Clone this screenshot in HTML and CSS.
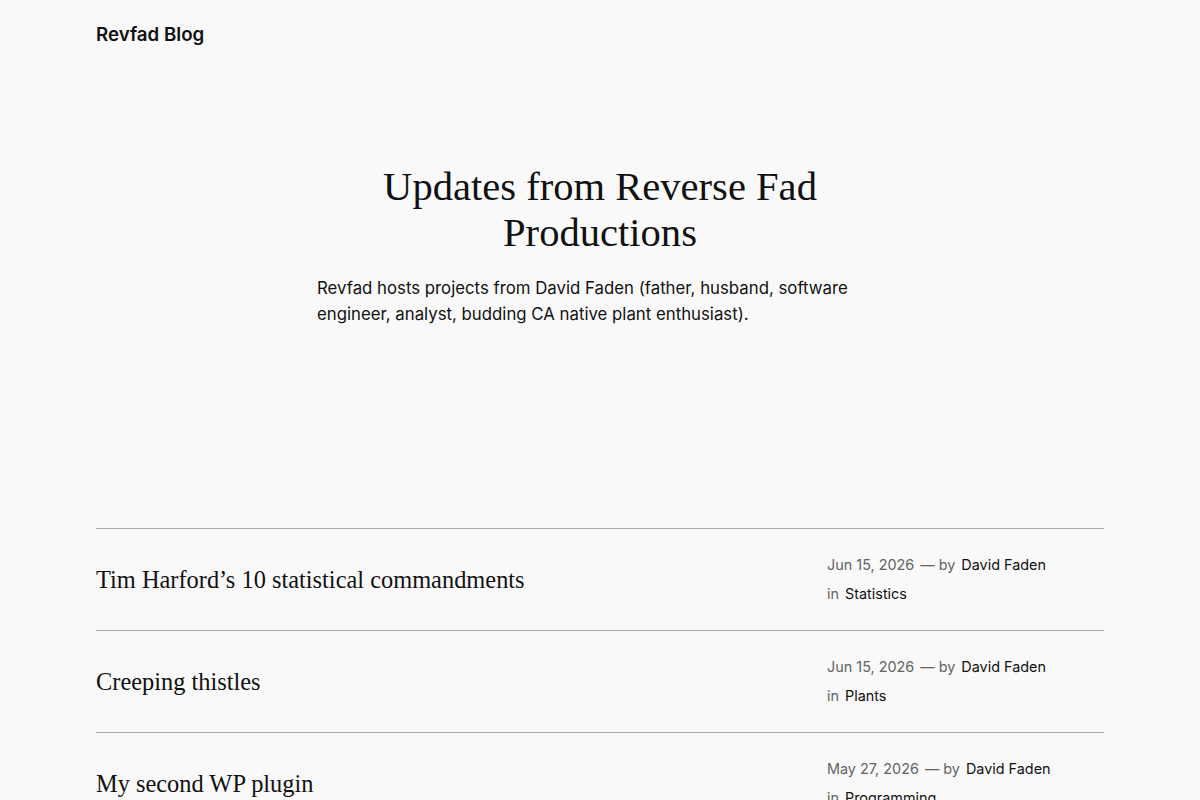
FILE: index.html
```html
<!DOCTYPE html>
<html>
<head>
    <title>Revfad Blog</title>
    <link rel="stylesheet" href="styles.css">
</head>
<body>
    <header class="site-header">
        <a class="site-title" href="#">Revfad Blog</a>
    </header>

    <section class="hero">
        <h1>Updates from Reverse Fad Productions</h1>
        <p>Revfad hosts projects from David Faden (father, husband, software engineer, analyst, budding CA native plant enthusiast).</p>
    </section>

    <main class="post-list">
        <article class="post-row">
            <h2 class="post-title"><a href="#">Tim Harford’s 10 statistical commandments</a></h2>
            <div class="post-meta">
                <div class="meta-line"><span class="muted">Jun 15, 2026</span><span class="muted">— by</span><a href="#">David Faden</a></div>
                <div class="meta-line"><span class="muted">in</span><a href="#">Statistics</a></div>
            </div>
        </article>
        <article class="post-row">
            <h2 class="post-title"><a href="#">Creeping thistles</a></h2>
            <div class="post-meta">
                <div class="meta-line"><span class="muted">Jun 15, 2026</span><span class="muted">— by</span><a href="#">David Faden</a></div>
                <div class="meta-line"><span class="muted">in</span><a href="#">Plants</a></div>
            </div>
        </article>
        <article class="post-row">
            <h2 class="post-title"><a href="#">My second WP plugin</a></h2>
            <div class="post-meta">
                <div class="meta-line"><span class="muted">May 27, 2026</span><span class="muted">— by</span><a href="#">David Faden</a></div>
                <div class="meta-line"><span class="muted">in</span><a href="#">Programming</a></div>
            </div>
        </article>
    </main>
</body>
</html>
```

FILE: styles.css
```css
body {
    margin: 0;
    background: #f9f9f9;
    color: #111111;
    font-family: Inter, "Noto Sans", sans-serif;
}
a { color: inherit; text-decoration: none; }

.site-header { padding: 24px 96px; }
.site-title {
    font-size: 18.7px;
    font-weight: 600;
    line-height: 22px;
    display: block;
}

.hero {
    width: 566px;
    margin: 0 auto;
    padding-top: 94px;
}
.hero h1 {
    margin: 0;
    font-family: "Liberation Serif", serif;
    font-weight: 400;
    font-size: 40.6px;
    line-height: 46px;
    text-align: center;
}
.hero p {
    margin: 19px 0 0;
    font-size: 16.8px;
    line-height: 26px;
}

.post-list {
    margin: 201px 96px 0;
}
.post-row {
    display: grid;
    grid-template-columns: 1fr 277px;
    align-items: center;
    min-height: 101px;
    border-top: 1px solid #ababab;
}
.post-title {
    margin: 0;
    font-family: "Liberation Serif", serif;
    font-weight: 400;
    font-size: 24.4px;
    line-height: 32px;
}
.post-meta {
    display: flex;
    flex-direction: column;
    gap: 7px;
    font-size: 14.4px;
    line-height: 22px;
}
.meta-line {
    display: flex;
    gap: 6px;
}
.muted { color: #636363; }
```
